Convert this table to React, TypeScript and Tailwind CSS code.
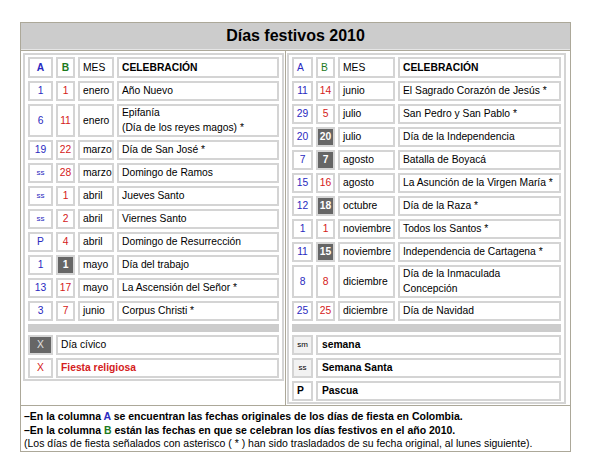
import React from 'react';

type Row = {
  a: string;
  b: string;
  mes: string;
  cel: React.ReactNode;
  dark?: boolean;
  tall?: boolean;
};

const leftRows: Row[] = [
  { a: '1', b: '1', mes: 'enero', cel: 'Año Nuevo' },
  {
    a: '6',
    b: '11',
    mes: 'enero',
    cel: (
      <>
        Epifanía
        <br />
        (Día de los reyes magos) *
      </>
    ),
    tall: true,
  },
  { a: '19', b: '22', mes: 'marzo', cel: 'Día de San José *' },
  { a: 'ss', b: '28', mes: 'marzo', cel: 'Domingo de Ramos' },
  { a: 'ss', b: '1', mes: 'abril', cel: 'Jueves Santo' },
  { a: 'ss', b: '2', mes: 'abril', cel: 'Viernes Santo' },
  { a: 'P', b: '4', mes: 'abril', cel: 'Domingo de Resurrección' },
  { a: '1', b: '1', mes: 'mayo', cel: 'Día del trabajo', dark: true },
  { a: '13', b: '17', mes: 'mayo', cel: 'La Ascensión del Señor *' },
  { a: '3', b: '7', mes: 'junio', cel: 'Corpus Christi *' },
];

const rightRows: Row[] = [
  { a: '11', b: '14', mes: 'junio', cel: 'El Sagrado Corazón de Jesús *' },
  { a: '29', b: '5', mes: 'julio', cel: 'San Pedro y San Pablo *' },
  { a: '20', b: '20', mes: 'julio', cel: 'Día de la Independencia', dark: true },
  { a: '7', b: '7', mes: 'agosto', cel: 'Batalla de Boyacá', dark: true },
  { a: '15', b: '16', mes: 'agosto', cel: 'La Asunción de la Virgen María *' },
  { a: '12', b: '18', mes: 'octubre', cel: 'Día de la Raza *', dark: true },
  { a: '1', b: '1', mes: 'noviembre', cel: 'Todos los Santos *' },
  { a: '11', b: '15', mes: 'noviembre', cel: 'Independencia de Cartagena *', dark: true },
  {
    a: '8',
    b: '8',
    mes: 'diciembre',
    cel: (
      <>
        Día de la Inmaculada
        <br />
        Concepción
      </>
    ),
    tall: true,
  },
  { a: '25', b: '25', mes: 'diciembre', cel: 'Día de Navidad' },
];

const Cell = ({ className = '', children }: { className?: string; children?: React.ReactNode }) => (
  <div className={`border-2 border-[#d4d4d4] flex items-center ${className}`}>{children}</div>
);

const DataRow = ({ row, cols }: { row: Row; cols: string }) => (
  <div className={`grid ${cols} gap-x-[3px] ${row.tall ? 'h-[33px]' : 'h-[20px]'}`}>
    <Cell className="justify-center text-[#2a2ac0]">
      {row.a === 'ss' ? <span className="text-[8px]">ss</span> : row.a}
    </Cell>
    {row.dark ? (
      <Cell className="justify-center bg-[#666666] text-white font-bold">{row.b}</Cell>
    ) : (
      <Cell className="justify-center text-[#d42020]">{row.b}</Cell>
    )}
    <Cell className="pl-[3px]">{row.mes}</Cell>
    <Cell className="pl-[3px] leading-[14.5px]">
      <span>{row.cel}</span>
    </Cell>
  </div>
);

export default function App() {
  const leftCols = 'grid-cols-[25px_19px_36px_1fr]';
  const rightCols = 'grid-cols-[21px_19px_57px_1fr]';

  return (
    <div className="w-[591px] h-[476px] bg-white pt-[22px] pl-[20px] font-['Liberation_Sans',Arial,sans-serif] text-[10.3px] text-black">
      <div className="w-[551px] border border-[#aca899] bg-[#aca899] flex flex-col gap-[1px]">
        {/* título */}
        <div className="h-[27px] bg-[#cccccc] border-b border-[#e6e6e6] flex items-center justify-center text-[16px] font-bold">
          Días festivos 2010
        </div>

        <div className="h-[354px] flex gap-[1px]">
          {/* columna izquierda */}
          <div className="w-[264px] bg-white pt-[2px] pl-[2px]">
            <div className="w-[261px] border-2 border-[#d4d4d4] px-[3px] pt-[2px] pb-[1px] flex flex-col gap-[3px]">
              <div className={`grid ${leftCols} gap-x-[3px] h-[21px]`}>
                <Cell className="justify-center font-bold text-[#2a2ac0]">A</Cell>
                <Cell className="justify-center font-bold text-[#1c7a1c]">B</Cell>
                <Cell className="pl-[3px]">MES</Cell>
                <Cell className="pl-[3px] font-bold">CELEBRACIÓN</Cell>
              </div>
              {leftRows.map((r, i) => (
                <DataRow key={i} row={r} cols={leftCols} />
              ))}
              <div className="h-[8px] bg-[#cccccc]" />
              <div className="grid grid-cols-[25px_1fr] gap-x-[3px] h-[20px]">
                <Cell className="justify-center bg-[#666666] text-[#e0e0e0]">X</Cell>
                <Cell className="pl-[3px]">Día cívico</Cell>
              </div>
              <div className="grid grid-cols-[25px_1fr] gap-x-[3px] h-[20px]">
                <Cell className="justify-center text-[#d42020]">X</Cell>
                <Cell className="pl-[3px] font-bold text-[#d42020]">Fiesta religiosa</Cell>
              </div>
            </div>
          </div>

          {/* columna derecha */}
          <div className="w-[284px] bg-white pt-[2px] pl-[1px]">
            <div className="w-[279px] border-2 border-[#d4d4d4] px-[3px] pt-[2px] pb-[1px] flex flex-col gap-[3px]">
              <div className={`grid ${rightCols} gap-x-[3px] h-[21px]`}>
                <Cell className="pl-[3px] text-[#2a2ac0]">A</Cell>
                <Cell className="pl-[3px] text-[#1c7a1c]">B</Cell>
                <Cell className="pl-[3px]">MES</Cell>
                <Cell className="pl-[3px] font-bold">CELEBRACIÓN</Cell>
              </div>
              {rightRows.map((r, i) => (
                <DataRow key={i} row={r} cols={rightCols} />
              ))}
              <div className="h-[8px] bg-[#cccccc]" />
              <div className="grid grid-cols-[21px_1fr] gap-x-[3px] h-[20px]">
                <Cell className="justify-center bg-[#f2f2f2] text-[8px]">sm</Cell>
                <Cell className="pl-[4px] font-bold">semana</Cell>
              </div>
              <div className="grid grid-cols-[21px_1fr] gap-x-[3px] h-[20px]">
                <Cell className="justify-center bg-[#f2f2f2] text-[8px]">ss</Cell>
                <Cell className="pl-[4px] font-bold">Semana Santa</Cell>
              </div>
              <div className="grid grid-cols-[21px_1fr] gap-x-[3px] h-[20px]">
                <Cell className="pl-[3px] font-bold">P</Cell>
                <Cell className="pl-[4px] font-bold">Pascua</Cell>
              </div>
            </div>
          </div>
        </div>

        {/* notas */}
        <div className="h-[45px] bg-white pl-[3px] pt-[4px] text-[10.5px] leading-[13.5px]">
          <p className="font-bold">
            –En la columna <span className="text-[#2a2ac0]">A</span> se encuentran las fechas originales de los días de
            fiesta en Colombia.
          </p>
          <p className="font-bold">
            –En la columna <span className="text-[#1c7a1c]">B</span> están las fechas en que se celebran los días festivos
            en el año 2010.
          </p>
          <p>
            (Los días de fiesta señalados con asterisco ( * ) han sido trasladados de su fecha original, al lunes
            siguiente).
          </p>
        </div>
      </div>
    </div>
  );
}
